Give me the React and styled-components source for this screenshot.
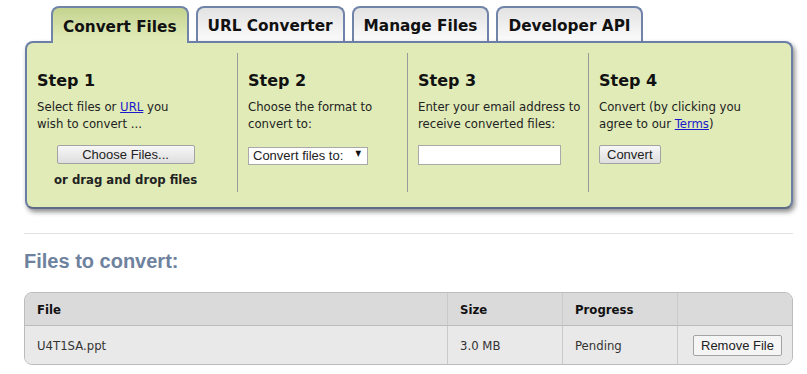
import React from "react";
import styled, { createGlobalStyle } from "styled-components";

const GlobalStyle = createGlobalStyle`
  body {
    margin: 0;
    background: #fff;
    font-family: "DejaVu Sans Condensed", "Liberation Sans", sans-serif;
    color: #222;
  }
`;

const App = () => {
  return (
    <Page>
      <GlobalStyle />
      <Tabs>
        <Tab active>Convert Files</Tab>
        <Tab>URL Converter</Tab>
        <Tab>Manage Files</Tab>
        <Tab>Developer API</Tab>
      </Tabs>
      <Panel>
        <StepColumn>
          <StepTitle>Step 1</StepTitle>
          <StepText>
            Select files or <Link href="#">URL</Link> you
            <br />
            wish to convert ...
          </StepText>
          <ChooseBlock>
            <Button wide>Choose Files...</Button>
            <DropText>or drag and drop files</DropText>
          </ChooseBlock>
        </StepColumn>
        <StepColumn divider>
          <StepTitle>Step 2</StepTitle>
          <StepText>
            Choose the format to
            <br />
            convert to:
          </StepText>
          <SelectWrap>
            <Select defaultValue="">
              <option value="">Convert files to:</option>
            </Select>
            <Arrow>▼</Arrow>
          </SelectWrap>
        </StepColumn>
        <StepColumn divider>
          <StepTitle>Step 3</StepTitle>
          <StepText>
            Enter your email address to
            <br />
            receive converted files:
          </StepText>
          <EmailInput type="text" />
        </StepColumn>
        <StepColumn divider>
          <StepTitle>Step 4</StepTitle>
          <StepText>
            Convert (by clicking you
            <br />
            agree to our <Link href="#">Terms</Link>)
          </StepText>
          <div>
            <Button>Convert</Button>
          </div>
        </StepColumn>
      </Panel>

      <Rule />
      <SectionTitle>Files to convert:</SectionTitle>

      <FileTable>
        <Row header>
          <Cell>File</Cell>
          <Cell>Size</Cell>
          <Cell>Progress</Cell>
          <Cell />
        </Row>
        <Row>
          <Cell>U4T1SA.ppt</Cell>
          <Cell>3.0 MB</Cell>
          <Cell>Pending</Cell>
          <Cell>
            <Button small>Remove File</Button>
          </Cell>
        </Row>
      </FileTable>
    </Page>
  );
};

const Page = styled.div`
  padding: 6px 14px 0 24px;
`;

const Tabs = styled.div`
  display: flex;
  gap: 7px;
  margin-left: 27px;
  margin-bottom: -2px;
`;

const Tab = styled.div`
  position: relative;
  z-index: ${(p) => (p.active ? 2 : 0)};
  height: ${(p) => (p.active ? "37px" : "35px")};
  padding: 2px 10px 0;
  box-sizing: border-box;
  display: flex;
  align-items: center;
  border: 2px solid #7083a8;
  border-bottom: none;
  border-radius: 8px 8px 0 0;
  background: ${(p) =>
    p.active
      ? "linear-gradient(#c4d38f, #dfeab6 85%)"
      : "linear-gradient(#e2e2e2, #fbfbfb)"};
  font-family: "DejaVu Sans", Verdana, sans-serif;
  font-weight: bold;
  font-size: 15.3px;
  color: #111;
`;

const Panel = styled.div`
  position: relative;
  z-index: 1;
  margin-left: 1px;
  display: grid;
  grid-template-columns: 210px 170px 181px 1fr;
  padding: 10px 0 15px;
  background: #e0ebb8;
  border: 2px solid #6b7ea6;
  border-bottom-color: #5d6b86;
  border-radius: 8px;
  box-shadow: 2px 3px 5px rgba(0, 0, 0, 0.45);
`;

const StepColumn = styled.div`
  padding: 18px 6px 0 10px;
  min-height: 121px;
  border-left: ${(p) => (p.divider ? "1px solid #999" : "none")};
`;

const StepTitle = styled.div`
  font-family: "DejaVu Sans", Verdana, sans-serif;
  font-weight: bold;
  font-size: 16px;
  line-height: 20px;
  color: #111;
`;

const StepText = styled.div`
  margin-top: 7px;
  font-size: 13px;
  line-height: 17px;
  white-space: nowrap;
  color: #222;
`;

const Link = styled.a`
  color: #1a1acc;
  text-decoration: underline;
`;

const ChooseBlock = styled.div`
  display: inline-flex;
  flex-direction: column;
  align-items: center;
  margin-left: 17px;
  margin-top: 13px;
`;

const Button = styled.button`
  font-family: "Liberation Sans", Arial, sans-serif;
  font-size: 13px;
  color: #222;
  white-space: nowrap;
  height: ${(p) => (p.small ? "21px" : "19px")};
  width: ${(p) => (p.wide ? "138px" : "auto")};
  padding: 0 7px;
  margin-top: ${(p) => (p.small ? "0" : "13px")};
  background: ${(p) =>
    p.small ? "#f5f5f5" : "linear-gradient(#f7f7f7, #dedede)"};
  border: 1px solid #a3a3a3;
  border-radius: 2px;
  ${ChooseBlock} & {
    margin-top: 0;
  }
`;

const DropText = styled.div`
  margin-top: 7px;
  font-size: 13px;
  font-weight: bold;
  line-height: 17px;
  color: #222;
`;

const SelectWrap = styled.div`
  position: relative;
  width: 120px;
  margin-top: 13px;
`;

const Select = styled.select`
  appearance: none;
  width: 120px;
  height: 18px;
  padding: 0 0 0 4px;
  font-family: "Liberation Sans", Arial, sans-serif;
  font-size: 13px;
  color: #222;
  background: #fff;
  border: 1px solid #a9a9a9;
  border-radius: 0;
`;

const Arrow = styled.span`
  position: absolute;
  right: 7px;
  top: 4px;
  font-size: 8px;
  line-height: 10px;
  color: #111;
  pointer-events: none;
`;

const EmailInput = styled.input`
  display: block;
  margin-top: 13px;
  width: 143px;
  height: 20px;
  box-sizing: border-box;
  border: 1px solid #a9a9a9;
  background: #fff;
`;

const Rule = styled.div`
  margin-top: 24px;
  height: 1px;
  background: #e2e2e2;
`;

const SectionTitle = styled.h2`
  margin: 15px 0 0;
  font-family: "Liberation Sans", Arial, sans-serif;
  font-size: 20px;
  line-height: 24px;
  font-weight: bold;
  color: #6e829e;
`;

const FileTable = styled.div`
  margin-top: 19px;
  border: 1px solid #bcbcbc;
  border-radius: 8px;
  overflow: hidden;
  background: #e9e9e9;
`;

const Row = styled.div`
  display: grid;
  grid-template-columns: 422px 115px 115px 1fr;
  height: ${(p) => (p.header ? "32px" : "38px")};
  background: ${(p) => (p.header ? "#dadada" : "#e9e9e9")};
  border-bottom: ${(p) => (p.header ? "1px solid #bcbcbc" : "none")};
  font-weight: ${(p) => (p.header ? "bold" : "normal")};
  color: ${(p) => (p.header ? "#111" : "#333")};
`;

const Cell = styled.div`
  display: flex;
  align-items: center;
  padding: 0 12px;
  font-size: 13px;
  & + & {
    border-left: 1px solid #cacaca;
  }
  &:last-child {
    padding: 0 0 0 15px;
  }
`;

export default App;
